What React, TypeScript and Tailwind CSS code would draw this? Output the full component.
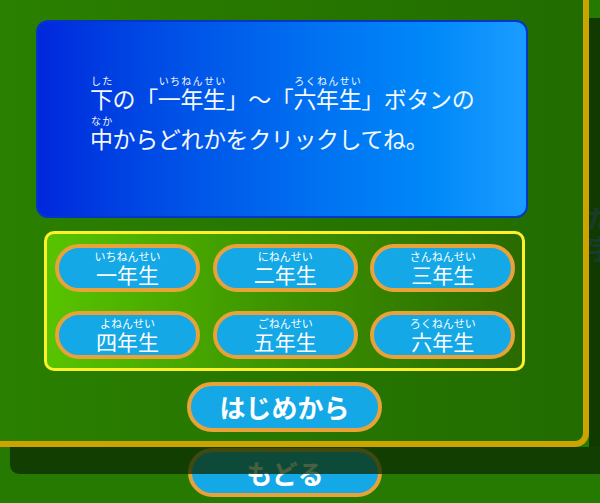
import React from "react";

const jp = { fontFamily: '"Noto Sans CJK JP", "Noto Sans", sans-serif' };

type Grade = { kana: string; label: string };

const grades: Grade[] = [
  { kana: "いちねんせい", label: "一年生" },
  { kana: "にねんせい", label: "二年生" },
  { kana: "さんねんせい", label: "三年生" },
  { kana: "よねんせい", label: "四年生" },
  { kana: "ごねんせい", label: "五年生" },
  { kana: "ろくねんせい", label: "六年生" },
];

function R({ base, kana }: { base: string; kana: string }) {
  return (
    <ruby className="[ruby-position:over]">
      {base}
      <rt className="text-[10px] leading-none tracking-[-0.5px]">{kana}</rt>
    </ruby>
  );
}

function GradeButton({ g }: { g: Grade }) {
  return (
    <button className="flex h-[48px] w-[145px] flex-col items-center justify-center rounded-full border-[4px] border-[#e8a238] bg-[#14a8e6] text-white">
      <span className="text-[11px] leading-none">{g.kana}</span>
      <span className="mt-[2px] text-[21px] leading-none">{g.label}</span>
    </button>
  );
}

export default function App() {
  return (
    <div
      className="relative h-[503px] w-[600px] overflow-hidden bg-[#267a02] text-white"
      style={jp}
    >
      {/* faded label behind the panel's shadow */}
      <div className="absolute left-[587px] top-[203px] flex flex-col text-[26px] font-bold leading-[30px] text-[#4f7fd8]">
        <span>だ</span>
        <span>字</span>
      </div>

      {/* main panel */}
      <div className="relative flex h-[447px] w-[589px] flex-col rounded-br-[14px] border-b-[6px] border-r-[6px] border-[#cda300] bg-gradient-to-r from-[#2a8000] to-[#226c00]">
        {/* message board */}
        <div className="ml-[36px] mt-[20px] h-[198px] w-[492px] rounded-[12px] border-[2px] border-[#0437c8] bg-gradient-to-r from-[#0426dc] to-[#1a9cff] pl-[52px] pt-[54px]">
          <p className="text-[23px] leading-[40px] tracking-[-0.4px] text-[#f4f8ff]">
            <R base="下" kana="した" />の「<R base="一年生" kana="いちねんせい" />」〜「
            <R base="六年生" kana="ろくねんせい" />」ボタンの
            <br />
            <R base="中" kana="なか" />からどれかをクリックしてね。
          </p>
        </div>

        {/* grade selector */}
        <div className="ml-[44px] mt-[13px] grid h-[140px] w-[481px] grid-cols-3 content-center gap-x-[14px] gap-y-[19px] rounded-[10px] border-[3px] border-[#fff02c] bg-gradient-to-r from-[#58c400] via-[#3c9200] to-[#2a6a00] px-[8px]">
          {grades.map((g) => (
            <GradeButton key={g.label} g={g} />
          ))}
        </div>

        <button className="ml-[187px] mt-[11px] flex h-[50px] w-[195px] items-center justify-center rounded-full border-[4px] border-[#e8a238] bg-[#14a8e6] text-[26px] font-bold leading-none text-white">
          はじめから
        </button>
      </div>

      {/* back button, partly under the panel's shadow */}
      <button className="ml-[188px] mt-[1px] flex h-[49px] w-[194px] items-center justify-center rounded-full border-[4px] border-[#e8a238] bg-[#14a8e6] text-[26px] font-bold leading-none text-white">
        もどる
      </button>

      {/* panel shadow: right side and bottom strip */}
      <div className="absolute left-[589px] top-[18px] h-[429px] w-[11px] bg-[#0b2a00]/80" />
      <div className="absolute left-[10px] top-[447px] h-[27px] w-[590px] rounded-bl-[9px] bg-[#0b2a00]/75" />
    </div>
  );
}
